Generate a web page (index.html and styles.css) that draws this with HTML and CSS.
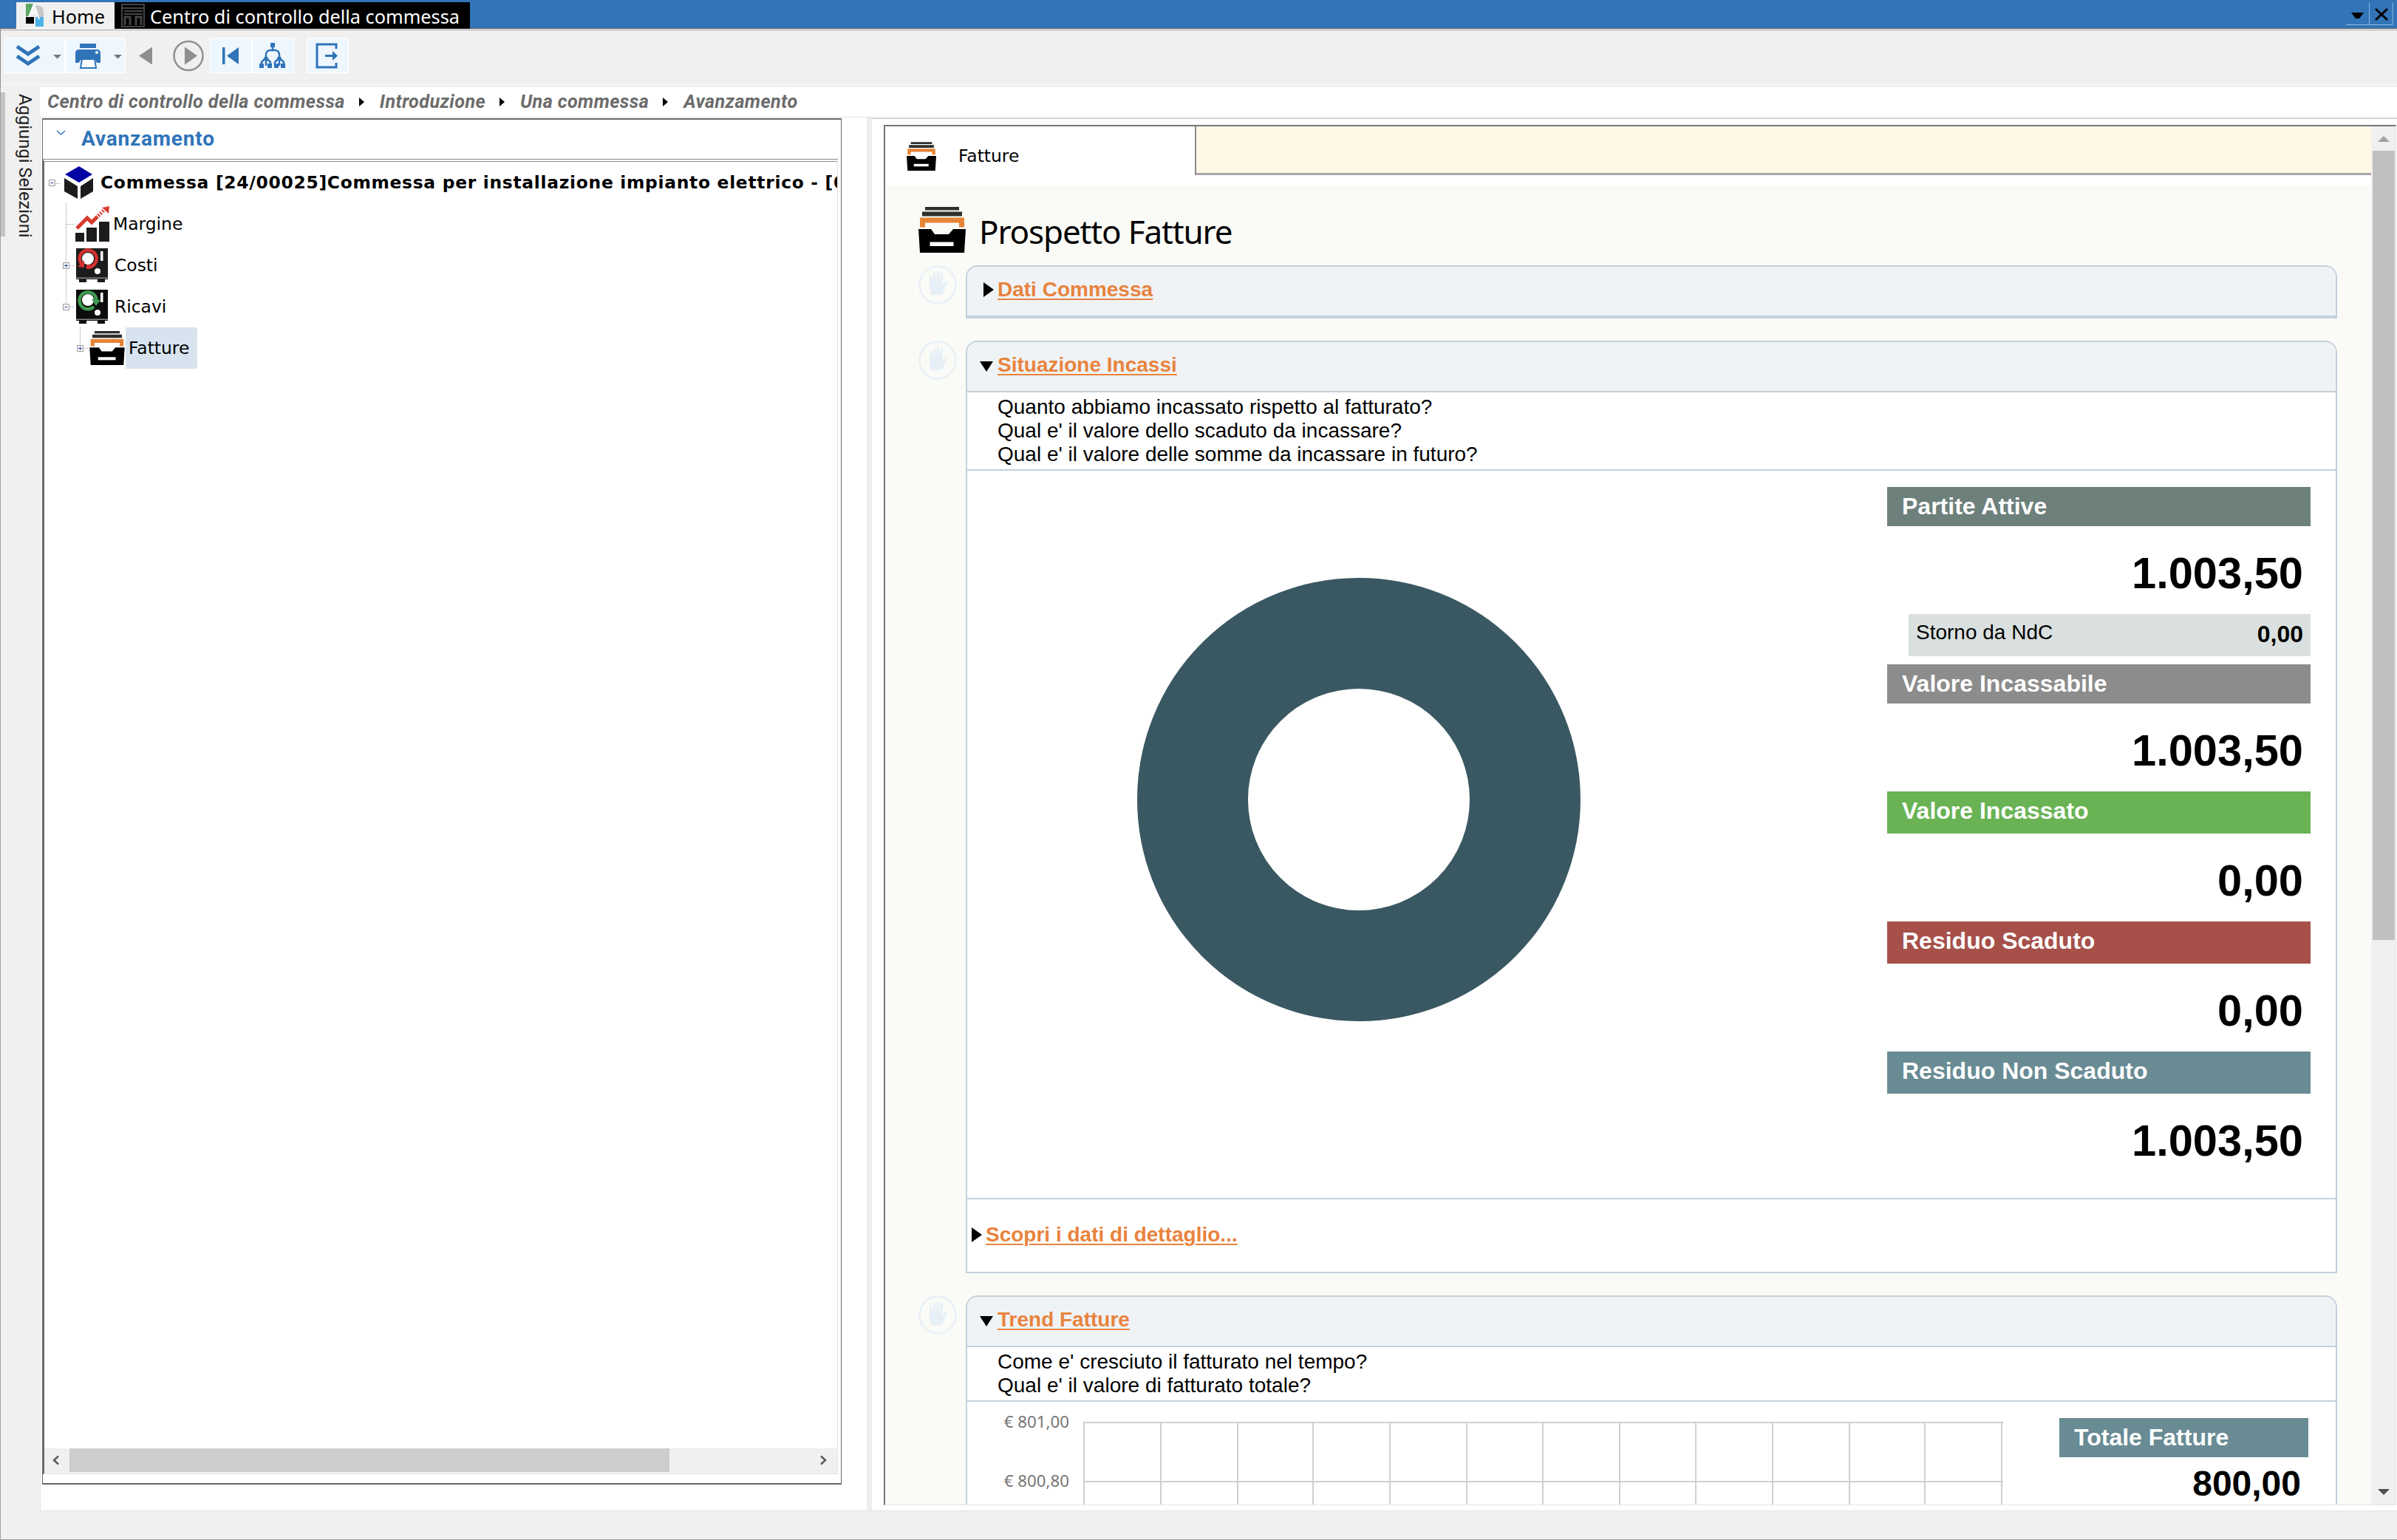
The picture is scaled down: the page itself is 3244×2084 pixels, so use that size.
FILE: index.html
```
<!DOCTYPE html>
<html lang="it">
<head>
    <meta charset="UTF-8">
    <meta name="viewport" content="width=device-width, initial-scale=1.0">
    <title>Centro di controllo della commessa</title>
    <link rel="stylesheet" href="styles.css">
</head>
<body>
    <!-- Shared icons -->
    <svg class="defs" width="0" height="0">
        <symbol id="tray" viewBox="0 0 64 62">
            <path fill="#2e2e2a" d="M9 0h46v4.500H9zM5 6.500h54V12.500H5z"/>
            <path fill="#e58436" d="M2 14.500h60v13h-7v-6H9v6H2z"/>
            <path d="M0 30h17l5 7h19l6-7h17l-2 32H2z"/>
            <path fill="#fff" d="M15.500 47.500h32v5.500h-32z"/>
        </symbol>
        <symbol id="hand" viewBox="0 0 52 53">
            <ellipse cx="26" cy="26.500" rx="24.500" ry="25" fill="none" stroke="#e8f0f7" stroke-width="2.500"/>
            <path fill="#e8f0f7" d="M17 40c-1-6-2-9-2-13V15q2-2 3 0l1 8 1-12q2-2 3 0l1 11 1-13q2-2 3 0v13l2-11q2-2 3 0l-1 16 4-5q3-1 3 1l-4 11c-1 3-2 4-3 6z"/>
        </symbol>
    </svg>

    <div class="titlebar">
        <div class="window-tab">
            <svg width="25" height="32" viewBox="0 0 25 32">
                <path fill="#5fa868" d="M0 0h10L4 17H0z"/>
                <path fill="#c8c8c8" d="M13 2q11 0 11 9v7H15z"/>
                <path d="M0 18h11v9H0z"/>
                <path fill="#4fb3e8" d="M13 18h11v13H13z"/>
                <path fill="none" stroke="#fff" stroke-width="2" d="M4 18L11 1l7 20M7 12h8"/>
            </svg>
            <span>Home</span>
        </div>
        <div class="window-tab active">
            <svg width="32" height="32" viewBox="0 0 32 32" fill="none" stroke="#444" stroke-width="2">
                <path d="M1 1h30v30H1zM1 6h30M4 10h25M4 14h25"/>
                <path stroke-width="3" d="M5 17v12M4 18h9M12 17v12M20 17v12M19 18h9M27 17v12"/>
            </svg>
            <span>Centro di controllo della commessa</span>
        </div>
        <div class="window-buttons">
            <svg width="64" height="31" viewBox="0 0 64 31">
                <path fill="none" stroke="#8fbbe4" d="M0 29.500h63M31.500 0v29M63 0v29"/>
                <path d="M7 13h17l-6 8h-5z"/>
                <path fill="none" stroke="#000" stroke-width="3" d="M40 8l16 15M56 8L40 23"/>
            </svg>
        </div>
    </div>

    <div class="toolbar">
        <div class="tool wide">
            <svg width="80" height="46" viewBox="0 0 80 46">
                <path fill="none" stroke="#2f74b9" stroke-width="5" d="M16 11l15 10 15-10M16 24l15 10 15-10"/>
                <path fill="#777" d="M65 22h11l-5.500 5.500z"/>
            </svg>
        </div>
        <div class="tool wide">
            <svg width="80" height="46" viewBox="0 0 80 46">
                <path fill="#2f74b9" d="M19 7h22v6H19zM18 15h24q5 0 5 5v13h-5l-2-4H20l-2 4h-5V20q0-5 5-5z"/>
                <circle cx="42" cy="19" r="2" fill="#fff"/>
                <path fill="#fff" stroke="#2f74b9" stroke-width="2" d="M22 28h17l2 12H20z"/>
                <path fill="#777" d="M65 22h11l-5.500 5.500z"/>
            </svg>
        </div>
        <div class="tool-plain">
            <svg width="114" height="46" viewBox="0 0 114 46">
                <path fill="#8f8f8f" d="M17 23.500l18-12v24z"/>
                <circle cx="84" cy="23.500" r="19.500" fill="none" stroke="#8f8f8f" stroke-width="2.500"/>
                <path fill="#8f8f8f" d="M79 11.500l17 12-17 12z"/>
            </svg>
        </div>
        <div class="tool">
            <svg width="55" height="46" viewBox="0 0 55 46">
                <path fill="#2f74b9" d="M16 12h3.500v23H16zM22 23.500l16-11.500v23z"/>
            </svg>
        </div>
        <div class="tool">
            <svg width="55" height="46" viewBox="0 0 55 46">
                <path fill="none" stroke="#2f74b9" stroke-width="2.500" d="M27 10v5M18 27v-5q0-5 5-6h8q5 1 5 6v5M12 37v-5l5-5h2l5 5v5M30 37v-5l5-5h2l5 5v5M18 27v10M36 27v10"/>
                <path fill="#2f74b9" d="M24 6h6v6h-6zM9 34h6v6H9zM15.500 25h5v5h-5zM20 34h6v6h-6zM29 34h6v6h-6zM33.500 25h5v5h-5zM38 34h6v6h-6z"/>
            </svg>
        </div>
        <div class="tool spaced">
            <svg width="55" height="46" viewBox="0 0 55 46">
                <path fill="none" stroke="#2f74b9" stroke-width="3" d="M39 14V8H13v31h26v-6"/>
                <path fill="#2f74b9" d="M24 22h10v-5l7 6.500-7 6.500v-5H24z"/>
            </svg>
        </div>
    </div>

    <div class="workspace">
        <div class="side-tab">
            <div class="side-handle"></div>
            <span>Aggiungi Selezioni</span>
        </div>

        <div class="main">
            <div class="breadcrumb">
                <span>Centro di controllo della commessa</span>
                <i></i>
                <span>Introduzione</span>
                <i></i>
                <span>Una commessa</span>
                <i></i>
                <span>Avanzamento</span>
            </div>

            <div class="panes">
                <div class="left-pane">
                    <div class="nav-box">
                        <div class="nav-title">
                            <svg width="13" height="8" viewBox="0 0 13 8"><path fill="none" stroke="#2f74b9" stroke-width="1.500" d="M1 1l5.500 5L12 1"/></svg>
                            <span>Avanzamento</span>
                        </div>
                        <div class="tree">
                            <div class="tree-row root">
                                <svg class="twist" width="16" height="56" viewBox="0 0 16 56">
                                    <path class="dots" d="M10 29.500h7"/>
                                    <path class="box" d="M.5 24.500h8v8h-8z"/><path class="sign" d="M2.500 28.500h4"/>
                                </svg>
                                <svg class="cube" width="40" height="45" viewBox="0 0 40 45">
                                    <path fill="#0202a4" d="M1 11L20 0l18 11-18 11z"/>
                                    <path fill="#1c1c1c" d="M0 16l18 11v17L0 34zM39 16L22 27v17l17-10z"/>
                                </svg>
                                <span class="tree-text">Commessa [24/00025]Commessa per installazione impianto elettrico - [0</span>
                            </div>
                            <div class="tree-row level1">
                                <svg class="twist" width="16" height="56" viewBox="0 0 16 56">
                                    <path class="dots" d="M4.500 0v56M5 28.500h11"/>
                                </svg>
                                <svg class="chart-icon" width="46" height="48" viewBox="0 0 46 48">
                                    <path fill="#1c1c1c" d="M0 36h12v12H0zM15 29h14v19H15zM32 21h14v27H32z"/>
                                    <path fill="none" stroke="#d83a30" stroke-width="5" d="M2 30l14-14 6 6 8-8"/>
                                    <path fill="none" stroke="#d83a30" stroke-width="5" stroke-dasharray="2 2" d="M31 13l8-8"/>
                                    <path fill="#d83a30" d="M46 0L36 2l9 8z"/>
                                </svg>
                                <span class="tree-text">Margine</span>
                            </div>
                            <div class="tree-row level1">
                                <svg class="twist" width="16" height="56" viewBox="0 0 16 56">
                                    <path class="dots" d="M4.500 0v56M10 28.500h6"/>
                                    <path class="box" d="M.5 24.500h8v8h-8z"/><path class="sign" d="M2 28.500h5M4.500 26v5"/>
                                </svg>
                                <svg class="safe-icon" width="43" height="46" viewBox="0 0 43 46">
                                    <path fill="#1c1c1c" d="M0 0h43v42H0zM4 42h10v4H4zM29 42h10v4H29z"/>
                                    <path fill="#8a8a8a" d="M0 39.500h43v1.500H0z"/>
                                    <path fill="#fff" d="M33 4h3.500v13H33z"/>
                                    <circle cx="16" cy="14" r="8" fill="#fff"/><circle cx="29" cy="31" r="4" fill="#fff"/>
                                    <path fill="none" stroke="#d83030" stroke-width="4.500" d="M7 21A11.500 11.500 0 1 1 17 25.500"/>
                                    <path fill="#d83030" d="M2 25l9 1V16zM14 22h5v6h-5z"/>
                                </svg>
                                <span class="tree-text">Costi</span>
                            </div>
                            <div class="tree-row level1">
                                <svg class="twist" width="16" height="56" viewBox="0 0 16 56">
                                    <path class="dots" d="M4.500 0v24M10 28.500h6"/>
                                    <path class="box" d="M.5 24.500h8v8h-8z"/><path class="sign" d="M2.500 28.500h4"/>
                                </svg>
                                <svg class="safe-icon" width="43" height="46" viewBox="0 0 43 46">
                                    <path fill="#0c0c0c" d="M0 0h43v42H0zM4 42h10v4H4zM29 42h10v4H29z"/>
                                    <path fill="#8a8a8a" d="M0 39.500h43v1.500H0z"/>
                                    <path fill="#fff" d="M33 4h3.500v13H33z"/>
                                    <circle cx="16" cy="14" r="8" fill="#fff"/><circle cx="29" cy="31" r="4" fill="#fff"/>
                                    <path fill="none" stroke="#3f9b4f" stroke-width="4.500" d="M24 23A11.500 11.500 0 1 1 27.500 14"/>
                                    <path fill="#3f9b4f" d="M21 13l12 1-6 8z"/>
                                </svg>
                                <span class="tree-text">Ricavi</span>
                            </div>
                            <div class="tree-row level2">
                                <svg class="twist" width="16" height="56" viewBox="0 0 16 56">
                                    <path class="dots" d="M4.500 0v24M10 28.500h6"/>
                                    <path class="box" d="M.5 24.500h8v8h-8z"/><path class="sign" d="M2 28.500h5M4.500 26v5"/>
                                </svg>
                                <svg class="tray-icon" width="48" height="46"><use href="#tray"/></svg>
                                <span class="tree-text selected">Fatture</span>
                            </div>
                            <div class="hscroll">
                                <svg width="34" height="32" viewBox="0 0 34 32"><path fill="none" stroke="#5a5a5a" stroke-width="2.500" d="M19 10.500l-6 5.500 6 5.500"/></svg>
                                <div class="hthumb"></div>
                                <svg width="34" height="32" viewBox="0 0 34 32"><path fill="none" stroke="#5a5a5a" stroke-width="2.500" d="M12 10.500l6 5.500-6 5.500"/></svg>
                            </div>
                        </div>
                    </div>
                </div>

                <div class="splitter"></div>

                <div class="right-pane">
                    <div class="report">
                        <div class="report-body">
                            <div class="report-tabs">
                                <div class="report-tab">
                                    <svg width="40" height="39"><use href="#tray"/></svg>
                                    <span>Fatture</span>
                                </div>
                                <div class="report-tabs-fill"></div>
                            </div>
                            <div class="report-page">
                                <div class="page-title">
                                    <svg width="64" height="62"><use href="#tray"/></svg>
                                    <h1>Prospetto Fatture</h1>
                                </div>

                                <div class="section">
                                    <svg class="hand" width="52" height="53"><use href="#hand"/></svg>
                                    <div class="card closed">
                                        <div class="card-head"><b class="arrow right"></b><a>Dati Commessa</a></div>
                                    </div>
                                </div>

                                <div class="section">
                                    <svg class="hand" width="52" height="53"><use href="#hand"/></svg>
                                    <div class="card">
                                        <div class="card-head"><b class="arrow down"></b><a>Situazione Incassi</a></div>
                                        <div class="questions">
                                            Quanto abbiamo incassato rispetto al fatturato?<br>
                                            Qual e' il valore dello scaduto da incassare?<br>
                                            Qual e' il valore delle somme da incassare in futuro?
                                        </div>
                                        <div class="incassi">
                                            <div class="donut-area">
                                                <svg width="602" height="602" viewBox="0 0 602 602">
                                                    <circle cx="301" cy="301" r="225" fill="none" stroke="#3a5862" stroke-width="150"/>
                                                </svg>
                                            </div>
                                            <div class="metrics">
                                                <div class="metric-label partite">Partite Attive</div>
                                                <div class="metric-value">1.003,50</div>
                                                <div class="storno"><span>Storno da NdC</span><b>0,00</b></div>
                                                <div class="metric-label incassabile">Valore Incassabile</div>
                                                <div class="metric-value">1.003,50</div>
                                                <div class="metric-label tall incassato">Valore Incassato</div>
                                                <div class="metric-value">0,00</div>
                                                <div class="metric-label tall scaduto">Residuo Scaduto</div>
                                                <div class="metric-value">0,00</div>
                                                <div class="metric-label tall non-scaduto">Residuo Non Scaduto</div>
                                                <div class="metric-value">1.003,50</div>
                                            </div>
                                        </div>
                                        <div class="detail"><b class="arrow right"></b><a>Scopri i dati di dettaglio...</a></div>
                                    </div>
                                </div>

                                <div class="section">
                                    <svg class="hand" width="52" height="53"><use href="#hand"/></svg>
                                    <div class="card">
                                        <div class="card-head"><b class="arrow down"></b><a>Trend Fatture</a></div>
                                        <div class="questions">
                                            Come e' cresciuto il fatturato nel tempo?<br>
                                            Qual e' il valore di fatturato totale?
                                        </div>
                                        <div class="trend">
                                            <div class="axis">
                                                <span>€ 801,00</span>
                                                <span>€ 800,80</span>
                                            </div>
                                            <svg class="grid" width="1246" height="160" viewBox="0 0 1246 160" fill="none" stroke="#d0d0d0" stroke-width="2">
                                                <path d="M0 1h1245M0 81h1245"/>
                                                <path d="M1 0v160M105 0v160M209 0v160M311 0v160M415 0v160M519 0v160M622 0v160M726 0v160M829 0v160M933 0v160M1037 0v160M1139 0v160M1243 0v160"/>
                                            </svg>
                                            <div class="total">
                                                <div class="metric-label non-scaduto">Totale Fatture</div>
                                                <div class="total-value">800,00</div>
                                            </div>
                                        </div>
                                    </div>
                                </div>
                            </div>
                        </div>
                        <div class="vscroll">
                            <svg width="33" height="33" viewBox="0 0 33 33"><path fill="#a0a0a0" d="M9 21h16l-8-8z"/></svg>
                            <div class="vthumb"></div>
                            <svg class="down-btn" width="33" height="33" viewBox="0 0 33 33"><path fill="#505050" d="M9 12h16l-8 8z"/></svg>
                        </div>
                    </div>
                </div>
            </div>
        </div>
    </div>
</body>
</html>
```
FILE: styles.css
```
* {
    box-sizing: border-box;
}

body {
    margin: 0;
    width: 3244px;
    height: 2084px;
    overflow: hidden;
    display: flex;
    flex-direction: column;
    background: #f0f0f0;
    border-bottom: 1px solid #a0a0a0;
    font-family: "Liberation Sans", Arial, sans-serif;
    font-size: 28px;
    color: #000;
}

svg {
    display: block;
    flex: none;
}

.defs {
    position: absolute;
}

/* Title bar */
.titlebar {
    height: 39px;
    flex: none;
    display: flex;
    padding: 3px 5px 0 22px;
    background: #3174b8;
    border-bottom: 1px solid #5c5c64;
    font: 25.3px/39px "Noto Sans", sans-serif;
}

.window-tab {
    display: flex;
    height: 36px;
    width: 133px;
    padding: 2px 0 0 13px;
    background: #f0f0f0;
    white-space: nowrap;
}

.window-tab span {
    margin: -2px 0 0 10px;
}

.window-tab.active {
    width: 481px;
    padding-left: 9px;
    background: #000;
    color: #fff;
}

.window-tab.active span {
    margin-left: 7px;
}

.window-buttons {
    margin-left: auto;
    padding-top: 1px;
}

/* Toolbar */
.toolbar {
    height: 79px;
    flex: none;
    display: flex;
    padding: 11px 0 0 5px;
    border-top: 1px solid #fff;
    border-left: 1px solid #8c8c8c;
    box-shadow: inset 0 1px #9b9b9b, inset 0 -3px #f0f0f0, inset 0 -4px #fafafa;
}

.tool,
.tool-plain {
    height: 48px;
    border: 1px solid transparent;
}

.tool {
    width: 57px;
    background: #eff7fe;
    border-color: #fff;
}

.tool.wide {
    width: 82px;
}

.tool-plain {
    width: 114px;
}

.tool.spaced {
    margin-left: 17px;
}

/* Side tab */
.workspace {
    flex: 1;
    display: flex;
    min-height: 0;
    border-left: 1px solid #a0a0a0;
}

.side-tab {
    width: 53px;
    flex: none;
    display: flex;
    padding-top: 7px;
}

.side-handle {
    width: 6px;
    height: 195px;
    background: #c3c3c3;
}

.side-tab span {
    writing-mode: vertical-rl;
    margin: 2px 0 0 10px;
    font: 23.8px/34px Roboto, sans-serif;
    color: #222;
}

.main {
    flex: 1;
    display: flex;
    flex-direction: column;
    min-width: 0;
    padding-bottom: 38px;
}

/* Breadcrumb */
.breadcrumb {
    height: 40px;
    flex: none;
    display: flex;
    align-items: center;
    padding-left: 10px;
    background: #fff;
    font: italic bold 25.2px/40px Roboto, sans-serif;
    letter-spacing: 0.4px;
    color: #6b6b6b;
}

.breadcrumb i {
    margin: 0 21px 0 19px;
    border: 6px solid transparent;
    border-left: 7px solid #000;
    border-right: 0;
}

.panes {
    flex: 1;
    display: flex;
    min-height: 0;
    border-top: 1px solid #e3e3e3;
    border-bottom: 1px solid #e3e3e3;
}

/* Left pane with the navigation tree */
.left-pane {
    width: 1119px;
    flex: none;
    padding: 1px 34px 35px 2px;
    background: #fff;
    border-left: 1px solid #e3e3e3;
}

.nav-box {
    height: 1849px;
    border: 2px solid #696969;
    border-right-width: 1px;
    border-left-width: 1px;
    padding-bottom: 12px;
    display: flex;
    flex-direction: column;
}

.nav-title {
    height: 53px;
    flex: none;
    display: flex;
    padding-left: 18px;
    font: bold 28px/52px Roboto, sans-serif;
    letter-spacing: 0.8px;
    color: #2f74b9;
}

.nav-title svg {
    margin-top: 14px;
}

.nav-title span {
    margin-left: 21px;
}

.tree {
    flex: 1;
    display: flex;
    flex-direction: column;
    margin-right: 4px;
    border: 2px solid #696969;
    border-top: 4px double #8a8a8a;
    border-right: 1px solid #e3e3e3;
    border-bottom: 1px solid #e3e3e3;
    overflow: hidden;
    font: 23.4px/56px "DejaVu Sans", Verdana, sans-serif;
}

.tree-row {
    height: 56px;
    flex: none;
    display: flex;
    align-items: center;
    white-space: nowrap;
}

.tree-row.root {
    padding-left: 6px;
    font-weight: bold;
    letter-spacing: 0.7px;
}

.tree-row.level1 {
    padding-left: 25px;
}

.tree-row.level2 {
    padding-left: 44px;
}

.dots {
    fill: none;
    stroke: #9a9a9a;
    stroke-dasharray: 1 1;
}

.box {
    fill: #f8f8f8;
    stroke: #9a9a9a;
}

.sign {
    fill: none;
    stroke: #3450a0;
}

.cube {
    margin: 0 9px 0 5px;
}

.chart-icon {
    margin: 0 5px 0 1px;
}

.safe-icon {
    margin: 0 9px 0 2px;
}

.tray-icon {
    margin: 0 1px;
}

.selected {
    width: 97px;
    padding-left: 4px;
    background: #d7e4ef;
}

.hscroll {
    height: 34px;
    flex: none;
    display: flex;
    margin-top: auto;
    background: #f0f0f0;
}

.hscroll svg:last-child {
    margin-left: auto;
}

.hthumb {
    width: 812px;
    height: 32px;
    background: #cdcdcd;
}

.splitter {
    width: 7px;
    flex: none;
    background: #ededed;
}

/* Report */
.right-pane {
    flex: 1;
    min-width: 0;
    padding: 8px 1px 7px 16px;
    background: #fff;
    border-top: 1px solid #c3c3c3;
    margin-top: 1px;
}

.report {
    height: 100%;
    display: flex;
    border: 2px solid #767676;
    border-right: 1px solid #e3e3e3;
    border-bottom: 1px solid #e3e3e3;
}

.report-body {
    flex: 1;
    display: flex;
    flex-direction: column;
    min-width: 0;
    overflow: hidden;
    background: #fafbf6;
}

.report-tabs {
    height: 80px;
    flex: none;
    display: flex;
    background: #fff;
}

.report-tab {
    width: 421px;
    height: 66px;
    display: flex;
    padding: 21px 0 0 29px;
    border-right: 2px solid #8c8c8c;
    font: 23.4px/39px "DejaVu Sans", Verdana, sans-serif;
}

.report-tab span {
    margin-left: 30px;
}

.report-tabs-fill {
    flex: 1;
    height: 66px;
    background: #fff8e6;
    border-bottom: 3px solid #a8a8a8;
}

.report-page {
    padding: 29px 46px 0 45px;
}

.page-title {
    display: flex;
    height: 79px;
}

.page-title h1 {
    margin: -2px 0 0 18px;
    font: 44px/70px "Noto Sans", sans-serif;
    letter-spacing: -1.15px;
}

.section {
    display: flex;
    margin-bottom: 30px;
}

.hand {
    margin-right: 12px;
}

.card {
    flex: 1;
    background: #fff;
    border: 2px solid #c3d0db;
    border-radius: 16px 16px 0 0;
}

.card.closed {
    border-bottom-width: 4px;
}

.card-head {
    height: 66px;
    display: flex;
    padding-left: 17px;
    line-height: 62px;
    background: #f0f3f6;
    border-radius: 14px 14px 0 0;
}

.card-head a,
.detail a {
    font-weight: bold;
    color: #e8833e;
    text-decoration: underline;
    text-decoration-thickness: 2px;
    text-underline-offset: 3px;
}

.arrow {
    width: 24px;
    height: 20px;
    margin-top: 21px;
}

.arrow::before {
    content: "";
    display: block;
    width: 0;
    border: 10px solid transparent;
}

.arrow.right::before {
    margin-left: 5px;
    border-left: 14px solid #000;
    border-right: 0;
}

.arrow.down::before {
    margin: 5px 0 0;
    border-width: 14px 9.5px 0;
    border-top-color: #000;
}

.questions {
    padding: 4px 0 4px 41px;
    line-height: 32px;
    border-top: 2px solid #c3d0db;
    border-bottom: 2px solid #c3d0db;
}

.incassi {
    height: 984px;
    display: flex;
}

.donut-area {
    width: 1245px;
    padding: 144px 0 0 229px;
}

.metrics {
    width: 573px;
    padding-top: 22px;
}

.metric-label {
    height: 53px;
    padding-left: 20px;
    font: bold 32px/52px "Liberation Sans", Arial, sans-serif;
    color: #fff;
}

.metric-label.tall {
    height: 57px;
}

.partite {
    background: #6d807c;
}

.incassabile {
    background: #8c8c8c;
}

.incassato {
    background: #69b355;
}

.scaduto {
    background: #a65049;
}

.non-scaduto {
    background: #698b94;
}

.metric-value {
    height: 119px;
    padding-right: 10px;
    font: bold 59.6px/128px "Liberation Sans", Arial, sans-serif;
    text-align: right;
}

.storno {
    height: 57px;
    display: flex;
    justify-content: space-between;
    margin: 0 0 11px 29px;
    padding: 0 10px 0 10px;
    background: #dae0df;
    line-height: 50px;
}

.storno b {
    font-size: 32px;
    line-height: 54px;
}

.detail {
    height: 100px;
    display: flex;
    padding: 17px 0 0 1px;
    line-height: 62px;
    border-top: 2px solid #c3d0db;
}

/* Trend chart */
.trend {
    height: 300px;
    display: flex;
}

.axis {
    width: 157px;
    padding: 7px 19px 0 0;
    font: 22.3px/40px "Noto Sans", sans-serif;
    color: #757575;
    text-align: right;
}

.axis span {
    display: block;
    height: 80px;
}

.grid {
    margin-top: 27px;
}

.total {
    width: 337px;
    margin: 22px 0 0 75px;
}

.total-value {
    padding-right: 10px;
    font: bold 48px/72px "Liberation Sans", Arial, sans-serif;
    text-align: right;
}

.vscroll {
    width: 33px;
    flex: none;
    display: flex;
    flex-direction: column;
    background: #f0f0f0;
}

.vthumb {
    width: 30px;
    height: 1068px;
    margin-left: 2px;
    background: #c0c0c0;
}

.down-btn {
    margin-top: auto;
}
```
